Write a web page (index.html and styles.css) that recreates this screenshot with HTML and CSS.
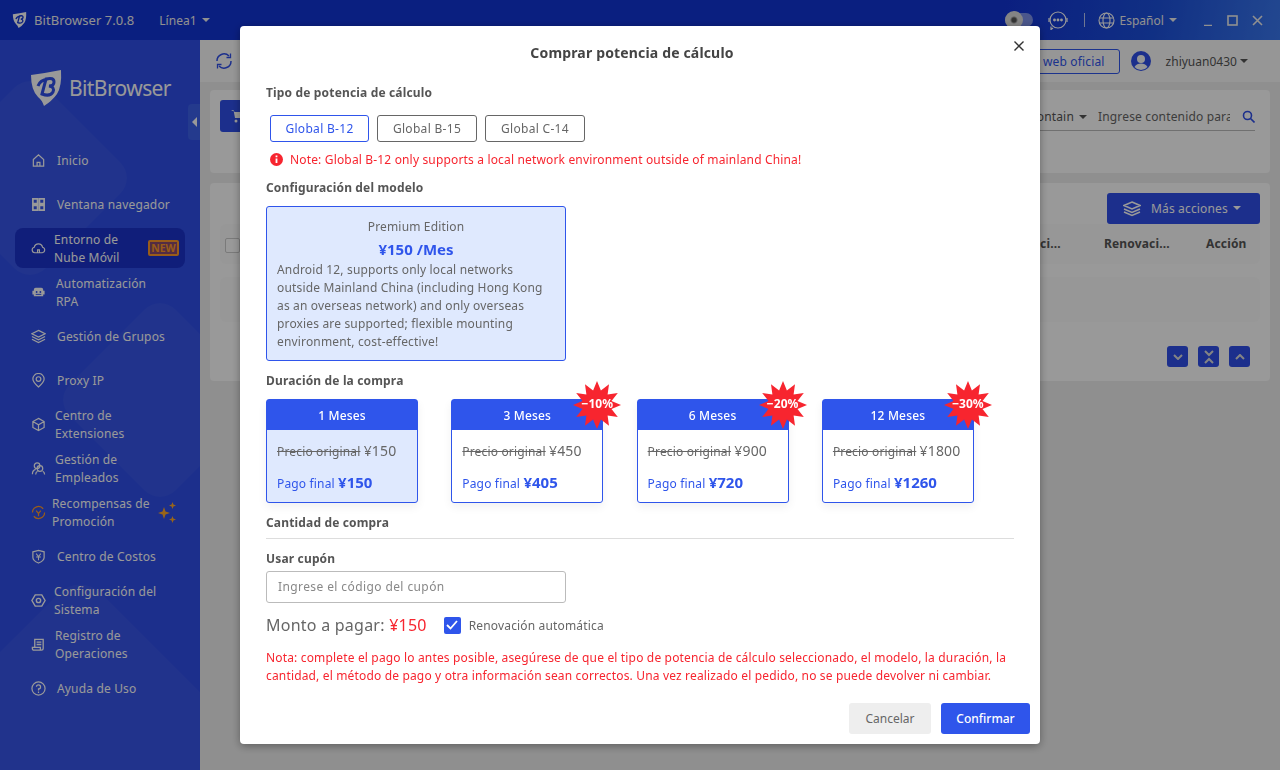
FILE: index.html
```html
<!DOCTYPE html>
<html lang="es">
<head>
<meta charset="utf-8">
<title>BitBrowser</title>
<link rel="stylesheet" href="styles.css">
</head>
<body>
<svg class="defs" width="0" height="0">
  <symbol id="shield" viewBox="0 0 32 36"><path d="M1 5 Q16 3 31 0 Q32 16 27 24 Q22 31 14 36 Q12 30 8 27 Q1 20 1 5Z" fill="currentColor"/><path d="M12 24 L16 9 Q24 7 24 12 Q24 16 19 16 Q25 17 23 22 Q20 27 12 24ZM8 16 Q10 10 18 9" fill="none" stroke="var(--shield-in)" stroke-width="3"/></symbol>
  <symbol id="star" viewBox="0 0 50 50"><polygon fill="#f7252f" points="49,25 39.5,28.9 45.8,37 35.6,35.6 37,45.8 28.9,39.5 25,49 21.1,39.5 13,45.8 14.4,35.6 4.2,37 10.5,28.9 1,25 10.5,21.1 4.2,13 14.4,14.4 13,4.2 21.1,10.5 25,1 28.9,10.5 37,4.2 35.6,14.4 45.8,13 39.5,21.1"/></symbol>
</svg>
<div class="app">
  <header class="topbar">
    <div class="brand">
      <svg class="brand-ico" width="15" height="16"><use href="#shield"/></svg>
      <span class="brand-name">BitBrowser 7.0.8</span>
      <span class="line-sel">Línea1 <i class="caret"></i></span>
    </div>
    <div class="top-right">
      <span class="toggle"><i class="knob"></i></span>
      <svg class="top-ico" width="24" height="20" viewBox="0 0 24 20" fill="none" stroke="currentColor" stroke-width="1.2"><circle cx="12" cy="10" r="8"/><path d="M3 12V8M21 12V8M7 18l-2 1.5 0-3"/><circle cx="8.5" cy="10" r=".8" fill="currentColor"/><circle cx="12" cy="10" r=".8" fill="currentColor"/><circle cx="15.5" cy="10" r=".8" fill="currentColor"/></svg>
      <i class="vsep"></i>
      <svg class="top-ico" width="17" height="17" viewBox="0 0 17 17" fill="none" stroke="currentColor" stroke-width="1.1"><circle cx="8.5" cy="8.5" r="7.5"/><ellipse cx="8.5" cy="8.5" rx="3.5" ry="7.5"/><path d="M1.5 6h14M1.5 11h14"/></svg>
      <span class="lang">Español <i class="caret"></i></span>
      <span class="win-btns">
        <svg width="10" height="12" viewBox="0 0 10 12" stroke="currentColor" stroke-width="1.5"><path d="M1 11.5h8"/></svg>
        <svg width="11" height="11" viewBox="0 0 11 11" fill="none" stroke="currentColor" stroke-width="1.6"><rect x="1" y="1" width="9" height="9"/></svg>
        <svg width="11" height="11" viewBox="0 0 11 11" fill="none" stroke="currentColor" stroke-width="1.6"><path d="M1 1l9 9M10 1l-9 9"/></svg>
      </span>
    </div>
  </header>
  <div class="body">
    <aside class="sidebar">
      <i class="deco deco-a"></i>
      <i class="deco deco-b"></i>
      <i class="deco deco-c"></i>
      <div class="logo">
        <svg class="logo-ico" width="32" height="36"><use href="#shield"/></svg>
        <span class="logo-text">BitBrowser</span>
      </div>
      <nav class="nav">
        <a class="nav-item"><svg class="nav-ico" viewBox="0 0 16 16" fill="none" stroke="currentColor" stroke-width="1.3"><path d="M2.500 7L8 2l5.500 5v7h-11zM6.500 14v-4h3v4"/></svg><span class="t57">Inicio</span></a>
        <a class="nav-item"><svg class="nav-ico" viewBox="0 0 16 16" fill="none" stroke="currentColor" stroke-width="1.800"><path d="M2 2h5v5H2zM9 2h5v5H9zM2 9h5v5H2zM9 9h5v5H9z"/></svg><span class="t57">Ventana navegador</span></a>
        <a class="nav-item active"><svg class="nav-ico" viewBox="0 0 16 16" fill="none" stroke="currentColor" stroke-width="1.200"><path d="M4 12.500a3 3 0 0 1-.5-5.900 4.500 4.500 0 0 1 8.800 0A3 3 0 0 1 12 12.500zM7 12V9.500h2V12"/></svg><span class="t54">Entorno de<br>Nube Móvil</span><b class="new">NEW</b></a>
        <a class="nav-item"><svg class="nav-ico" viewBox="0 0 16 16" fill="currentColor"><path d="M5 3h6a2 2 0 0 1 2 2v1h1.500v4H13v2H3v-2H1.500V6H3V5a2 2 0 0 1 2-2z"/><circle cx="6" cy="7.500" r="1" fill="#2f4fe9"/><circle cx="10" cy="7.500" r="1" fill="#2f4fe9"/><path d="M5 10h6" stroke="#2f4fe9"/></svg><span class="t56">Automatización<br>RPA</span></a>
        <a class="nav-item"><svg class="nav-ico" viewBox="0 0 16 16" fill="none" stroke="currentColor" stroke-width="1.300"><path d="M8 1.500L15 5l-7 3.500L1 5zM1 8l7 3.500L15 8M1 11l7 3.500L15 11"/></svg><span class="t57">Gestión de Grupos</span></a>
        <a class="nav-item"><svg class="nav-ico" viewBox="0 0 16 16" fill="none" stroke="currentColor" stroke-width="1.300"><path d="M8 15C4 11.500 2 9 2 6.500a6 6 0 0 1 12 0C14 9 12 11.500 8 15z"/><circle cx="8" cy="6.500" r="2.500"/></svg><span class="t57">Proxy IP</span></a>
        <a class="nav-item"><svg class="nav-ico" viewBox="0 0 16 16" fill="none" stroke="currentColor" stroke-width="1.300"><path d="M8 1.500l6 3.300v6.400l-6 3.300-6-3.300V4.800zM2 4.800l6 3.600 6-3.600M8 8.400v6.100"/></svg><span class="t55">Centro de<br>Extensiones</span></a>
        <a class="nav-item"><svg class="nav-ico" viewBox="0 0 16 16" fill="none" stroke="currentColor" stroke-width="1.300"><circle cx="6.500" cy="5" r="3"/><circle cx="9.500" cy="8" r="3"/><path d="M1.500 14c0-3 1.500-4.500 3.500-5M14.500 14.500c0-2-1-3-2-3.500M5 14.500c0-2 1-3 2-3.500"/></svg><span class="t55">Gestión de<br>Empleados</span></a>
        <a class="nav-item promo"><svg class="nav-ico" viewBox="0 0 16 16" fill="none" stroke="currentColor" stroke-width="1.300"><path d="M1.500 8a6.500 6.500 0 0 1 11.500-4M14.500 8a6.500 6.500 0 0 1-11.500 4"/><path d="M5.500 6l2.500 3 2.500-3M8 9v3"/></svg><span class="t52">Recompensas de<br>Promoción</span>
          <svg class="spark" width="18" height="21" viewBox="0 0 18 21" fill="currentColor"><path d="M6 5l1.500 4.500L12 11l-4.500 1.500L6 17l-1.500-4.500L0 11l4.500-1.500zM14.500 0l.9 2.600 2.600.9-2.600.9-.9 2.600-.9-2.600-2.600-.9 2.600-.9zM14.500 14l.9 2.600 2.600.9-2.600.9-.9 2.600-.9-2.600-2.600-.9 2.600-.9z"/></svg></a>
        <a class="nav-item"><svg class="nav-ico" viewBox="0 0 16 16" fill="none" stroke="currentColor" stroke-width="1.300"><path d="M2 3l6-1.500L14 3v6c0 2.500-2.500 4.500-6 6-3.500-1.500-6-3.500-6-6z"/><path d="M5.500 5L8 8l2.500-3M5.500 8.500h5M8 8v4" stroke-width="1.100"/></svg><span class="t57">Centro de Costos</span></a>
        <a class="nav-item"><svg class="nav-ico" viewBox="0 0 16 16" fill="none" stroke="currentColor" stroke-width="1.500"><path d="M4.500 2h7L15 8l-3.500 6h-7L1 8z"/><circle cx="8" cy="8" r="2.300"/></svg><span class="t54">Configuración del<br>Sistema</span></a>
        <a class="nav-item"><svg class="nav-ico" viewBox="0 0 16 16" fill="none" stroke="currentColor" stroke-width="1.400"><path d="M4 11V2.500h9V12a2 2 0 0 1-2 2H3a1.500 1.500 0 0 1-1.500-1.500V11H10v3M6 5.500h5M6 8h5"/></svg><span class="t55">Registro de<br>Operaciones</span></a>
        <a class="nav-item"><svg class="nav-ico" viewBox="0 0 16 16" fill="none" stroke="currentColor" stroke-width="1.300"><circle cx="8" cy="8" r="7"/><path d="M5.800 6.200A2.200 2.200 0 1 1 8 8.500v1.500M8 11.300v1.400"/></svg><span class="t57">Ayuda de Uso</span></a>
      </nav>
    </aside>
    <main class="main">
      <span class="handle"><i></i></span>
      <div class="toolbar">
        <svg class="refresh" width="18" height="18" viewBox="0 0 18 18" fill="none" stroke="currentColor" stroke-width="1.500"><path d="M2 9a7 7 0 0 1 12-5M16 9a7 7 0 0 1-12 5"/><path d="M15.500 1.500v4h-4M2.500 16.500v-4h4" stroke-width="1.300"/></svg>
        <div class="tool-right">
          <span class="site-btn">web oficial</span>
          <svg class="avatar" width="20" height="20" viewBox="0 0 20 20"><circle cx="10" cy="10" r="10" fill="currentColor"/><circle cx="10" cy="8" r="4" fill="#fbfbfb"/><path d="M3.500 16c1.500-3 4-3.500 6.500-3.500s5 .5 6.500 3.500a8.500 8.500 0 0 1-13 0z" fill="#fbfbfb"/></svg>
          <span class="user">zhiyuan0430 <i class="caret dark"></i></span>
        </div>
      </div>
      <section class="filter-card">
        <span class="cart-btn"><svg width="16" height="16" viewBox="0 0 16 16" fill="#fff"><path d="M1 2h2.500L5 10h8l2-6H5z"/><circle cx="6" cy="13" r="1.500"/><circle cx="12" cy="13" r="1.500"/></svg></span>
        <div class="search">
          <span class="contain">Contain <i class="caret dark"></i></span>
          <span class="search-ph">Ingrese contenido para</span>
          <svg class="search-ico" width="13" height="13" viewBox="0 0 13 13" fill="none" stroke="currentColor" stroke-width="1.600"><circle cx="5.500" cy="5.500" r="4"/><path d="M8.500 8.500l4 4"/></svg>
        </div>
      </section>
      <section class="table-card">
        <div class="actions">
          <span class="more-btn"><svg width="18" height="16" viewBox="0 0 18 16" fill="none" stroke="currentColor" stroke-width="1.500"><path d="M9 1l8 3.500L9 8 1 4.500zM1 8l8 3.500L17 8M1 11l8 3.500 8-3.500"/></svg><span>Más acciones</span><i class="caret"></i></span>
        </div>
        <div class="thead">
          <i class="check"></i>
          <span class="th th1">Renovaci...</span>
          <span class="th th2">Renovaci...</span>
          <span class="th th3">Acción</span>
        </div>
        <div class="trow"></div>
        <div class="pager">
          <span class="pg"><svg width="10" height="6" viewBox="0 0 10 6" fill="none" stroke="currentColor" stroke-width="2"><path d="M1 1l4 4 4-4"/></svg></span>
          <span class="pg"><svg width="10" height="14" viewBox="0 0 10 14" fill="none" stroke="currentColor" stroke-width="2"><path d="M1 1l4 4 4-4M1 13l4-4 4 4"/></svg></span>
          <span class="pg"><svg width="10" height="6" viewBox="0 0 10 6" fill="none" stroke="currentColor" stroke-width="2"><path d="M1 5l4-4 4 4"/></svg></span>
        </div>
      </section>
    </main>
  </div>
</div>
<div class="overlay"></div>
<div class="modal">
  <h2 class="modal-title">Comprar potencia de cálculo</h2>
  <svg class="close" width="10" height="10" viewBox="0 0 10 10" fill="none" stroke="#333" stroke-width="1.400"><path d="M.5.500l9 9M9.500.500l-9 9"/></svg>
  <h3 class="label lb-type">Tipo de potencia de cálculo</h3>
  <div class="types">
    <span class="type sel">Global B-12</span>
    <span class="type">Global B-15</span>
    <span class="type">Global C-14</span>
  </div>
  <p class="warn"><svg width="13" height="13" viewBox="0 0 13 13"><circle cx="6.500" cy="6.500" r="6.500" fill="#f7252f"/><path d="M6.500 5.500v4.500M6.500 2.500v1.700" stroke="#fff" stroke-width="1.800"/></svg>Note: Global B-12 only supports a local network environment outside of mainland China!</p>
  <h3 class="label lb-model">Configuración del modelo</h3>
  <div class="plan">
    <div class="plan-name">Premium Edition</div>
    <div class="plan-price">¥150 /Mes</div>
    <p class="plan-desc">Android 12, supports only local networks outside Mainland China (including Hong Kong as an overseas network) and only overseas proxies are supported; flexible mounting environment, cost-effective!</p>
  </div>
  <h3 class="label lb-dur">Duración de la compra</h3>
  <div class="durations">
    <div class="dur sel">
      <div class="dur-head">1 Meses</div>
      <div class="dur-body"><div class="orig"><s>Precio original</s> <span>¥150</span></div><div class="final">Pago final <b>¥150</b></div></div>
    </div>
    <div class="dur">
      <div class="dur-head">3 Meses</div>
      <div class="dur-body"><div class="orig"><s>Precio original</s> <span>¥450</span></div><div class="final">Pago final <b>¥405</b></div></div>
      <div class="burst"><svg width="50" height="50"><use href="#star"/></svg><span>−10%</span></div>
    </div>
    <div class="dur">
      <div class="dur-head">6 Meses</div>
      <div class="dur-body"><div class="orig"><s>Precio original</s> <span>¥900</span></div><div class="final">Pago final <b>¥720</b></div></div>
      <div class="burst"><svg width="50" height="50"><use href="#star"/></svg><span>−20%</span></div>
    </div>
    <div class="dur">
      <div class="dur-head">12 Meses</div>
      <div class="dur-body"><div class="orig"><s>Precio original</s> <span>¥1800</span></div><div class="final">Pago final <b>¥1260</b></div></div>
      <div class="burst"><svg width="50" height="50"><use href="#star"/></svg><span>−30%</span></div>
    </div>
  </div>
  <h3 class="label lb-qty">Cantidad de compra</h3>
  <hr class="rule">
  <h3 class="label lb-coupon">Usar cupón</h3>
  <div class="coupon">Ingrese el código del cupón</div>
  <div class="pay">
    <span class="pay-label">Monto a pagar: <em>¥150</em></span>
    <span class="cb"><svg width="12" height="10" viewBox="0 0 12 10" fill="none" stroke="#fff" stroke-width="1.800"><path d="M1 5l3.500 3.500L11 1"/></svg></span>
    <span class="cb-text">Renovación automática</span>
  </div>
  <p class="note">Nota: complete el pago lo antes posible, asegúrese de que el tipo de potencia de cálculo seleccionado, el modelo, la duración, la cantidad, el método de pago y otra información sean correctos. Una vez realizado el pedido, no se puede devolver ni cambiar.</p>
  <div class="foot">
    <span class="btn cancel">Cancelar</span>
    <span class="btn ok">Confirmar</span>
  </div>
</div>
</body>
</html>
```
FILE: styles.css
```css
* { box-sizing: border-box; }
html, body { margin: 0; height: 100%; overflow: hidden; }
body { font-family: "Noto Sans", "Open Sans", sans-serif; font-size: 12px; letter-spacing: .16px; color: #555; background: #eee; }
.defs { position: absolute; }
i { font-style: normal; }
.caret { display: inline-block; width: 0; height: 0; border: 4px solid transparent; border-top: 4px solid currentColor; border-bottom: 0; vertical-align: middle; margin-left: 2px; position: relative; top: -1px; }

.app { width: 1280px; height: 770px; display: flex; flex-direction: column; isolation: isolate; }
.topbar { height: 40px; flex: none; display: flex; justify-content: space-between; align-items: center; color: #f0f0f0; background: linear-gradient(100deg, #1234d6 0%, #1234d6 78%, #1c50dc 90%, #3a78f0 100%); padding: 0 17px 0 12px; }
.brand { display: flex; align-items: center; --shield-in: #1234d6; }
.brand-ico { color: #fff; }
.brand-name { font-size: 13px; margin-left: 7px; letter-spacing: .05px; }
.line-sel { font-size: 12px; margin-left: 25px; letter-spacing: .05px; }
.top-right { display: flex; align-items: center; }
.toggle { width: 28px; height: 14px; border-radius: 7px; background: rgba(255,255,255,.45); position: relative; margin-right: 13px; }
.knob { position: absolute; left: 0; top: -2px; width: 18px; height: 18px; border-radius: 50%; background: radial-gradient(circle, #555 0 2px, #ddd 4px); }
.top-ico { color: #fff; }
.vsep { width: 1px; height: 14px; background: rgba(255,255,255,.7); margin: 0 13px 0 14px; }
.lang { font-size: 12px; margin-left: 5px; letter-spacing: 0; }
.win-btns { display: flex; align-items: center; gap: 14px; margin-left: 26px; }

.body { flex: 1; display: flex; min-height: 0; }
.sidebar { width: 200px; flex: none; background: #2f4fe9; position: relative; overflow: hidden; color: #fff; }
.deco { position: absolute; transform: rotate(45deg); border-radius: 22px; background: rgba(255,255,255,.04); }
.deco-a { left: -45px; top: 63px; width: 150px; height: 150px; }
.deco-b { left: 85px; top: 285px; width: 150px; height: 150px; }
.deco-c { left: -60px; top: 590px; width: 280px; height: 280px; border-radius: 30px; }
.logo { height: 58px; margin: 20px 0 0 30px; display: flex; align-items: flex-start; --shield-in: #2f4fe9; position: relative; }
.logo-ico { color: #fff; margin-top: 10px; }
.logo-text { font-size: 21px; margin: 14px 0 0 7px; color: #fff; letter-spacing: -.6px; }
.nav { display: flex; flex-direction: column; gap: 4px; margin-top: 22px; position: relative; }
.nav-item { height: 40px; margin: 0 15px; padding-left: 16px; display: flex; align-items: center; font-size: 12px; line-height: 18px; border-radius: 8px; position: relative; color: #fff; }
.nav-item > span { padding-top: 2px; }
.nav-item.active { background: #1c33cb; }
.nav-ico { width: 15px; height: 15px; flex: none; }
.promo .nav-ico { color: #ff9a2a; }
.t52 { margin-left: 6px; }
.t54 { margin-left: 8px; }
.t55 { margin-left: 9px; }
.t56 { margin-left: 10px; }
.t57 { margin-left: 11px; }
.new { position: absolute; left: 133px; top: 12px; width: 31px; height: 16px; border: 2px solid #ff9a2a; border-radius: 2px; color: #ff9a2a; font-size: 10.5px; line-height: 12px; text-align: center; font-weight: 700; background: #8a4a70; letter-spacing: 0; }
.spark { position: absolute; left: 143px; top: 10px; color: #ffa82a; }

.main { flex: 1; min-width: 0; position: relative; padding: 0 10px; background: #eee; }
.handle { position: absolute; left: -12px; top: 64px; width: 12px; height: 36px; background: #3c62ec; border-radius: 4px 0 0 4px; display: flex; align-items: center; justify-content: center; }
.handle i { border: 5px solid transparent; border-right: 5px solid #fff; border-left: 0; }
.toolbar { height: 42px; margin: 0 -10px; padding: 0 0 0 15px; background: #fbfbfb; display: flex; align-items: center; justify-content: space-between; color: #2f4fe9; }
.tool-right { display: flex; align-items: center; }
.site-btn { width: 92px; height: 25px; border: 1px solid #2f55eb; border-radius: 3px; font-size: 12px; line-height: 23px; text-align: right; padding-right: 14px; color: #2f55eb; }
.avatar { margin-left: 11px; color: #2f4fe9; }
.user { margin: 0 32px 0 15px; font-size: 12px; color: #555; letter-spacing: 0; white-space: nowrap; }
.user .caret { margin-left: 0; }
.caret.dark { color: #555; }
.filter-card { height: 83px; margin-top: 8px; background: #fff; border-radius: 4px; position: relative; }
.cart-btn { position: absolute; left: 10px; top: 10px; width: 40px; height: 32px; background: #2f4fe9; border-radius: 3px; display: flex; align-items: center; padding-left: 10px; }
.search { position: absolute; right: 15px; top: 13px; width: 252px; height: 28px; border-bottom: 1px solid #bbb; padding-left: 26px; display: flex; align-items: center; white-space: nowrap; overflow: hidden; }
.contain { width: 69px; flex: none; font-size: 12px; }
.search-ph { font-size: 12px; width: 132px; overflow: hidden; flex: none; color: #666; }
.search-ico { margin-left: 12px; color: #2f4fe9; flex: none; }
.table-card { height: 198px; margin-top: 10px; background: #fff; border-radius: 4px; padding: 10px 10px 0; position: relative; }
.actions { display: flex; justify-content: flex-end; }
.more-btn { width: 153px; height: 31px; background: #2f4fe9; color: #fff; border-radius: 3px; display: flex; align-items: center; padding-left: 16px; font-size: 12px; }
.more-btn span { margin: 0 3px 0 10px; }
.thead { height: 40px; background: #fcfcfc; border-radius: 6px; position: relative; }
.check { position: absolute; left: 5px; top: 14px; width: 15px; height: 15px; border: 1px solid #ccc; border-radius: 2px; background: #fff; }
.th { position: absolute; top: 11px; font-size: 12px; font-weight: 700; color: #555; white-space: nowrap; }
.th1 { left: 775px; }
.th2 { left: 884px; }
.th3 { left: 986px; }
.trow { height: 45px; margin-top: 13px; background: #fcfcfc; border-radius: 6px; }
.pager { display: flex; justify-content: flex-end; gap: 10px; margin: 24px 10px 0 0; }
.pg { width: 21px; height: 21px; background: #2f4fe9; border-radius: 3px; display: flex; align-items: center; justify-content: center; color: #ddd; }

.overlay { position: fixed; inset: 0; background: rgba(0,0,0,.4); }
.modal { position: fixed; left: 240px; top: 26px; width: 800px; height: 718px; background: #fff; border-radius: 4px; box-shadow: 0 2px 8px rgba(0,0,0,.35); padding: 0 26px; color: #555; }
.modal-title { margin: 17px 16px 0 0; text-align: center; font-size: 14px; line-height: 20px; font-weight: 700; color: #444; }
.close { position: absolute; right: 16px; top: 15px; }
.label { margin: 0; font-size: 12px; line-height: 18px; font-weight: 700; color: #555; }
.lb-type { margin-top: 21px; }
.types { display: flex; gap: 8px; margin: 13px 0 0 4px; }
.type { width: 100px; height: 27px; border: 1px solid #666; border-radius: 3px; text-align: center; line-height: 25px; font-size: 12px; letter-spacing: .3px; color: #666; }
.type.sel { width: 99px; border-color: #2f55eb; color: #2f55eb; }
.warn { margin: 8px 0 0 4px; display: flex; align-items: center; gap: 7px; height: 18px; font-size: 12px; color: #f7252f; white-space: nowrap; }
.lb-model { margin-top: 11px; }
.plan { width: 300px; height: 155px; margin-top: 9px; border: 1px solid #2f55eb; border-radius: 3px; background: #dfe9fe; padding: 10px 10px 0; }
.plan-name { text-align: center; line-height: 20px; font-size: 12px; color: #666; }
.plan-price { text-align: center; font-size: 15px; font-weight: 700; line-height: 24px; letter-spacing: 0; color: #2f55eb; }
.plan-desc { margin: 0; font-size: 12px; line-height: 18px; color: #666; }
.lb-dur { margin-top: 11px; }
.durations { display: flex; gap: 33.3px; margin-top: 9px; }
.dur { width: 152px; height: 104px; border: 1px solid #2f55eb; border-radius: 3px; position: relative; box-shadow: 0 4px 10px rgba(0,0,0,.06); }
.dur.sel { background: #dfe9fe; }
.dur-head { height: 30px; background: #2f55eb; color: #fff; text-align: center; font-size: 12px; line-height: 31px; font-weight: 500; }
.dur-body { padding: 10px 10px 0; }
.orig { font-size: 12px; line-height: 22px; color: #666; white-space: nowrap; }
.orig span { font-size: 14px; }
.final { margin-top: 8px; font-size: 12px; line-height: 22px; color: #2f55eb; white-space: nowrap; }
.final b { font-size: 15px; letter-spacing: 0; }
.burst { position: absolute; right: -20px; top: -20px; width: 50px; height: 50px; }
.burst span { position: absolute; inset: 0; text-align: center; line-height: 48px; color: #fff; font-weight: 700; font-size: 12px; letter-spacing: 0; }
.burst svg { display: block; }
.lb-qty { margin-top: 11px; }
.rule { margin: 6px 0 0; border: 0; border-top: 1px solid #ddd; }
.lb-coupon { margin-top: 11px; }
.coupon { width: 300px; height: 32px; margin-top: 3px; border: 1px solid #bbb; border-radius: 3px; padding-left: 11px; line-height: 30px; font-size: 12px; letter-spacing: .4px; color: #888; }
.pay { display: flex; align-items: center; height: 26px; margin-top: 9px; }
.pay-label { font-size: 16px; letter-spacing: .24px; color: #666; }
.pay-label em { font-style: normal; color: #f7252f; }
.cb { width: 17px; height: 17px; margin-left: 17px; background: #2f55eb; border-radius: 2px; display: flex; align-items: center; justify-content: center; }
.cb-text { margin-left: 8px; font-size: 12px; color: #666; }
.note { margin: 11px 0 0; width: 748px; font-size: 12px; line-height: 18px; color: #f7252f; }
.foot { position: absolute; right: 10px; bottom: 10px; display: flex; gap: 10px; }
.btn { height: 31px; border-radius: 3px; text-align: center; line-height: 31px; font-size: 12px; letter-spacing: 0; }
.cancel { width: 82px; background: #eeeeee; color: #666; }
.ok { width: 89px; background: #2f55eb; color: #fff; font-weight: 500; }
```
